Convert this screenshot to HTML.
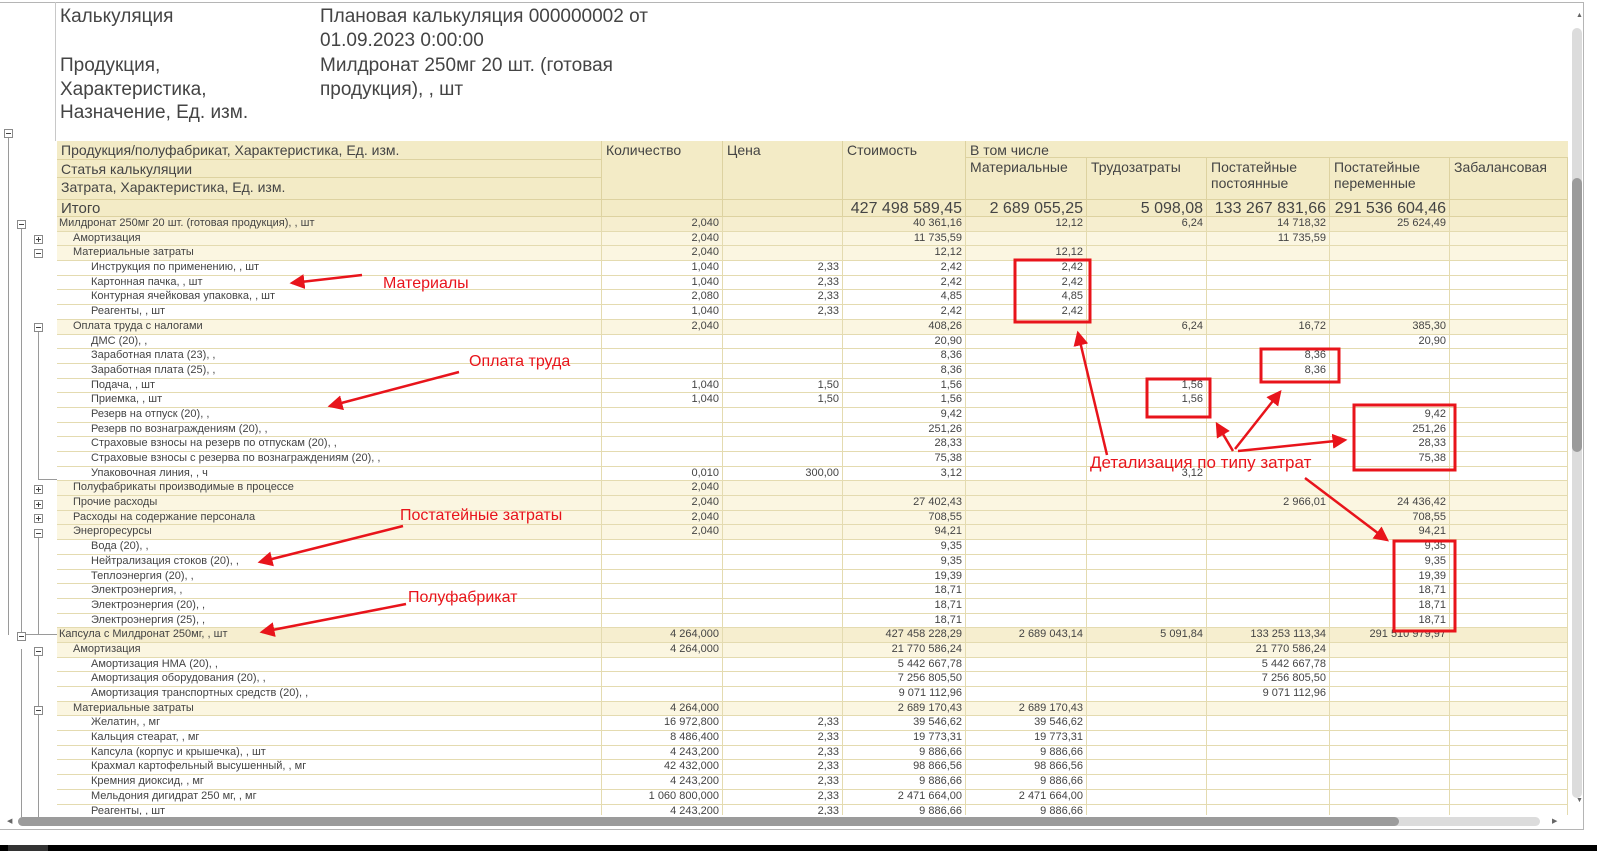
<!DOCTYPE html>
<html><head><meta charset="utf-8">
<style>
*{box-sizing:border-box;margin:0;padding:0}
body{width:1597px;height:851px;background:#fff;position:relative;overflow:hidden;font-family:"Liberation Sans",sans-serif;color:#333}
.frame{position:absolute;left:0;top:2px;width:1584px;height:828px;border:1px solid #b5b5b5;border-left:none;background:#fff}
.vl{position:absolute;left:55px;top:2px;width:1px;height:139px;background:#c8c8c8}
.t{position:absolute;font-size:19px;color:#444;line-height:23.5px}
#grid{position:absolute;left:57px;top:141px;width:1511px;height:674px;overflow:hidden}
.hd{position:absolute;background:#f3ebc6;border-right:1px solid #ddd2a0;border-bottom:1px solid #ddd2a0;font-size:14px;color:#444;padding:1px 4px;line-height:16px}
.rows{position:absolute;left:0;top:76px;width:1511px}
.r{display:flex;height:14.7px;border-bottom:1px solid #e4dbb0;font-size:11px;line-height:13.7px;color:#444}
.r div{border-right:1px solid #e4dbb0;text-align:right;padding-right:3px;white-space:nowrap;overflow:hidden}
.r div:first-child{text-align:left;width:545px}
.g0{background:#f6eecf}.g1{background:#fbf6e1}.d{background:#fff}
.c1,.c2{width:121px}.c3{width:123px}.c4{width:121px}.c5{width:120px}.c6{width:123px}.c7{width:120px}.c8{width:118px}
.c2{width:120px}
.l1{padding-left:16px}.l2{padding-left:34px}.l0{padding-left:2px}
.ic{position:absolute;width:9px;height:9px;border:1px solid #8a8a8a;background:#fff}
.ic:before{content:"";position:absolute;left:1px;top:3px;width:5px;height:1px;background:#444}
.ic.p:after{content:"";position:absolute;left:3px;top:1px;width:1px;height:5px;background:#444}
.tl{position:absolute;background:#9a9a9a}
.ann{position:absolute;color:#e8141b;font-size:16px;font-family:"Liberation Sans",sans-serif}
</style></head><body>
<div class="frame"></div>
<div class="vl"></div>
<div class="t" style="left:60px;top:5px">Калькуляция</div>
<div class="t" style="left:320px;top:5px">Плановая калькуляция 000000002 от<br>01.09.2023 0:00:00</div>
<div class="t" style="left:60px;top:54px">Продукция,<br>Характеристика,<br>Назначение, Ед. изм.</div>
<div class="t" style="left:320px;top:54px">Милдронат 250мг 20 шт. (готовая<br>продукция), , шт</div>

<div id="grid">
<div class="hd" style="left:0;top:0;width:545px;height:19px">Продукция/полуфабрикат, Характеристика, Ед. изм.</div>
<div class="hd" style="left:0;top:19px;width:545px;height:18px">Статья калькуляции</div>
<div class="hd" style="left:0;top:37px;width:545px;height:22px">Затрата, Характеристика, Ед. изм.</div>
<div class="hd" style="left:0;top:59px;width:545px;height:17px;font-size:15px">Итого</div>
<div class="hd" style="left:545px;top:0;width:121px;height:59px">Количество</div>
<div class="hd" style="left:666px;top:0;width:120px;height:59px">Цена</div>
<div class="hd" style="left:786px;top:0;width:123px;height:59px">Стоимость</div>
<div class="hd" style="left:909px;top:0;width:602px;height:17px;border-right:none">В том числе</div>
<div class="hd" style="left:909px;top:17px;width:121px;height:42px">Материальные</div>
<div class="hd" style="left:1030px;top:17px;width:120px;height:42px">Трудозатраты</div>
<div class="hd" style="left:1150px;top:17px;width:123px;height:42px">Постатейные постоянные</div>
<div class="hd" style="left:1273px;top:17px;width:120px;height:42px">Постатейные переменные</div>
<div class="hd" style="left:1393px;top:17px;width:118px;height:42px">Забалансовая</div>
<div class="hd" style="left:545px;top:59px;width:121px;height:17px"></div>
<div class="hd" style="left:666px;top:59px;width:120px;height:17px"></div>
<div class="hd" style="left:786px;top:59px;width:123px;height:17px;text-align:right;font-size:16px;padding-right:3px">427 498 589,45</div>
<div class="hd" style="left:909px;top:59px;width:121px;height:17px;text-align:right;font-size:16px;padding-right:3px">2 689 055,25</div>
<div class="hd" style="left:1030px;top:59px;width:120px;height:17px;text-align:right;font-size:16px;padding-right:3px">5 098,08</div>
<div class="hd" style="left:1150px;top:59px;width:123px;height:17px;text-align:right;font-size:16px;padding-right:3px">133 267 831,66</div>
<div class="hd" style="left:1273px;top:59px;width:120px;height:17px;text-align:right;font-size:16px;padding-right:3px">291 536 604,46</div>
<div class="hd" style="left:1393px;top:59px;width:118px;height:17px"></div>

<div class="rows">
<div class="r g0"><div class="l0">Милдронат 250мг 20 шт. (готовая продукция), , шт</div><div class="c1">2,040</div><div class="c2"></div><div class="c3">40 361,16</div><div class="c4">12,12</div><div class="c5">6,24</div><div class="c6">14 718,32</div><div class="c7">25 624,49</div><div class="c8"></div></div>
<div class="r g1"><div class="l1">Амортизация</div><div class="c1">2,040</div><div class="c2"></div><div class="c3">11 735,59</div><div class="c4"></div><div class="c5"></div><div class="c6">11 735,59</div><div class="c7"></div><div class="c8"></div></div>
<div class="r g1"><div class="l1">Материальные затраты</div><div class="c1">2,040</div><div class="c2"></div><div class="c3">12,12</div><div class="c4">12,12</div><div class="c5"></div><div class="c6"></div><div class="c7"></div><div class="c8"></div></div>
<div class="r d"><div class="l2">Инструкция по применению, , шт</div><div class="c1">1,040</div><div class="c2">2,33</div><div class="c3">2,42</div><div class="c4">2,42</div><div class="c5"></div><div class="c6"></div><div class="c7"></div><div class="c8"></div></div>
<div class="r d"><div class="l2">Картонная пачка, , шт</div><div class="c1">1,040</div><div class="c2">2,33</div><div class="c3">2,42</div><div class="c4">2,42</div><div class="c5"></div><div class="c6"></div><div class="c7"></div><div class="c8"></div></div>
<div class="r d"><div class="l2">Контурная ячейковая упаковка, , шт</div><div class="c1">2,080</div><div class="c2">2,33</div><div class="c3">4,85</div><div class="c4">4,85</div><div class="c5"></div><div class="c6"></div><div class="c7"></div><div class="c8"></div></div>
<div class="r d"><div class="l2">Реагенты, , шт</div><div class="c1">1,040</div><div class="c2">2,33</div><div class="c3">2,42</div><div class="c4">2,42</div><div class="c5"></div><div class="c6"></div><div class="c7"></div><div class="c8"></div></div>
<div class="r g1"><div class="l1">Оплата труда с налогами</div><div class="c1">2,040</div><div class="c2"></div><div class="c3">408,26</div><div class="c4"></div><div class="c5">6,24</div><div class="c6">16,72</div><div class="c7">385,30</div><div class="c8"></div></div>
<div class="r d"><div class="l2">ДМС (20), ,</div><div class="c1"></div><div class="c2"></div><div class="c3">20,90</div><div class="c4"></div><div class="c5"></div><div class="c6"></div><div class="c7">20,90</div><div class="c8"></div></div>
<div class="r d"><div class="l2">Заработная плата (23), ,</div><div class="c1"></div><div class="c2"></div><div class="c3">8,36</div><div class="c4"></div><div class="c5"></div><div class="c6">8,36</div><div class="c7"></div><div class="c8"></div></div>
<div class="r d"><div class="l2">Заработная плата (25), ,</div><div class="c1"></div><div class="c2"></div><div class="c3">8,36</div><div class="c4"></div><div class="c5"></div><div class="c6">8,36</div><div class="c7"></div><div class="c8"></div></div>
<div class="r d"><div class="l2">Подача, , шт</div><div class="c1">1,040</div><div class="c2">1,50</div><div class="c3">1,56</div><div class="c4"></div><div class="c5">1,56</div><div class="c6"></div><div class="c7"></div><div class="c8"></div></div>
<div class="r d"><div class="l2">Приемка, , шт</div><div class="c1">1,040</div><div class="c2">1,50</div><div class="c3">1,56</div><div class="c4"></div><div class="c5">1,56</div><div class="c6"></div><div class="c7"></div><div class="c8"></div></div>
<div class="r d"><div class="l2">Резерв на отпуск (20), ,</div><div class="c1"></div><div class="c2"></div><div class="c3">9,42</div><div class="c4"></div><div class="c5"></div><div class="c6"></div><div class="c7">9,42</div><div class="c8"></div></div>
<div class="r d"><div class="l2">Резерв по вознаграждениям (20), ,</div><div class="c1"></div><div class="c2"></div><div class="c3">251,26</div><div class="c4"></div><div class="c5"></div><div class="c6"></div><div class="c7">251,26</div><div class="c8"></div></div>
<div class="r d"><div class="l2">Страховые взносы на резерв по отпускам (20), ,</div><div class="c1"></div><div class="c2"></div><div class="c3">28,33</div><div class="c4"></div><div class="c5"></div><div class="c6"></div><div class="c7">28,33</div><div class="c8"></div></div>
<div class="r d"><div class="l2">Страховые взносы с резерва по вознаграждениям (20), ,</div><div class="c1"></div><div class="c2"></div><div class="c3">75,38</div><div class="c4"></div><div class="c5"></div><div class="c6"></div><div class="c7">75,38</div><div class="c8"></div></div>
<div class="r d"><div class="l2">Упаковочная линия, , ч</div><div class="c1">0,010</div><div class="c2">300,00</div><div class="c3">3,12</div><div class="c4"></div><div class="c5">3,12</div><div class="c6"></div><div class="c7"></div><div class="c8"></div></div>
<div class="r g1"><div class="l1">Полуфабрикаты производимые в процессе</div><div class="c1">2,040</div><div class="c2"></div><div class="c3"></div><div class="c4"></div><div class="c5"></div><div class="c6"></div><div class="c7"></div><div class="c8"></div></div>
<div class="r g1"><div class="l1">Прочие расходы</div><div class="c1">2,040</div><div class="c2"></div><div class="c3">27 402,43</div><div class="c4"></div><div class="c5"></div><div class="c6">2 966,01</div><div class="c7">24 436,42</div><div class="c8"></div></div>
<div class="r g1"><div class="l1">Расходы на содержание персонала</div><div class="c1">2,040</div><div class="c2"></div><div class="c3">708,55</div><div class="c4"></div><div class="c5"></div><div class="c6"></div><div class="c7">708,55</div><div class="c8"></div></div>
<div class="r g1"><div class="l1">Энергоресурсы</div><div class="c1">2,040</div><div class="c2"></div><div class="c3">94,21</div><div class="c4"></div><div class="c5"></div><div class="c6"></div><div class="c7">94,21</div><div class="c8"></div></div>
<div class="r d"><div class="l2">Вода (20), ,</div><div class="c1"></div><div class="c2"></div><div class="c3">9,35</div><div class="c4"></div><div class="c5"></div><div class="c6"></div><div class="c7">9,35</div><div class="c8"></div></div>
<div class="r d"><div class="l2">Нейтрализация стоков (20), ,</div><div class="c1"></div><div class="c2"></div><div class="c3">9,35</div><div class="c4"></div><div class="c5"></div><div class="c6"></div><div class="c7">9,35</div><div class="c8"></div></div>
<div class="r d"><div class="l2">Теплоэнергия (20), ,</div><div class="c1"></div><div class="c2"></div><div class="c3">19,39</div><div class="c4"></div><div class="c5"></div><div class="c6"></div><div class="c7">19,39</div><div class="c8"></div></div>
<div class="r d"><div class="l2">Электроэнергия, ,</div><div class="c1"></div><div class="c2"></div><div class="c3">18,71</div><div class="c4"></div><div class="c5"></div><div class="c6"></div><div class="c7">18,71</div><div class="c8"></div></div>
<div class="r d"><div class="l2">Электроэнергия (20), ,</div><div class="c1"></div><div class="c2"></div><div class="c3">18,71</div><div class="c4"></div><div class="c5"></div><div class="c6"></div><div class="c7">18,71</div><div class="c8"></div></div>
<div class="r d"><div class="l2">Электроэнергия (25), ,</div><div class="c1"></div><div class="c2"></div><div class="c3">18,71</div><div class="c4"></div><div class="c5"></div><div class="c6"></div><div class="c7">18,71</div><div class="c8"></div></div>
<div class="r g0"><div class="l0">Капсула с Милдронат 250мг, , шт</div><div class="c1">4 264,000</div><div class="c2"></div><div class="c3">427 458 228,29</div><div class="c4">2 689 043,14</div><div class="c5">5 091,84</div><div class="c6">133 253 113,34</div><div class="c7">291 510 979,97</div><div class="c8"></div></div>
<div class="r g1"><div class="l1">Амортизация</div><div class="c1">4 264,000</div><div class="c2"></div><div class="c3">21 770 586,24</div><div class="c4"></div><div class="c5"></div><div class="c6">21 770 586,24</div><div class="c7"></div><div class="c8"></div></div>
<div class="r d"><div class="l2">Амортизация НМА (20), ,</div><div class="c1"></div><div class="c2"></div><div class="c3">5 442 667,78</div><div class="c4"></div><div class="c5"></div><div class="c6">5 442 667,78</div><div class="c7"></div><div class="c8"></div></div>
<div class="r d"><div class="l2">Амортизация оборудования (20), ,</div><div class="c1"></div><div class="c2"></div><div class="c3">7 256 805,50</div><div class="c4"></div><div class="c5"></div><div class="c6">7 256 805,50</div><div class="c7"></div><div class="c8"></div></div>
<div class="r d"><div class="l2">Амортизация транспортных средств (20), ,</div><div class="c1"></div><div class="c2"></div><div class="c3">9 071 112,96</div><div class="c4"></div><div class="c5"></div><div class="c6">9 071 112,96</div><div class="c7"></div><div class="c8"></div></div>
<div class="r g1"><div class="l1">Материальные затраты</div><div class="c1">4 264,000</div><div class="c2"></div><div class="c3">2 689 170,43</div><div class="c4">2 689 170,43</div><div class="c5"></div><div class="c6"></div><div class="c7"></div><div class="c8"></div></div>
<div class="r d"><div class="l2">Желатин, , мг</div><div class="c1">16 972,800</div><div class="c2">2,33</div><div class="c3">39 546,62</div><div class="c4">39 546,62</div><div class="c5"></div><div class="c6"></div><div class="c7"></div><div class="c8"></div></div>
<div class="r d"><div class="l2">Кальция стеарат, , мг</div><div class="c1">8 486,400</div><div class="c2">2,33</div><div class="c3">19 773,31</div><div class="c4">19 773,31</div><div class="c5"></div><div class="c6"></div><div class="c7"></div><div class="c8"></div></div>
<div class="r d"><div class="l2">Капсула (корпус и крышечка), , шт</div><div class="c1">4 243,200</div><div class="c2">2,33</div><div class="c3">9 886,66</div><div class="c4">9 886,66</div><div class="c5"></div><div class="c6"></div><div class="c7"></div><div class="c8"></div></div>
<div class="r d"><div class="l2">Крахмал картофельный высушенный, , мг</div><div class="c1">42 432,000</div><div class="c2">2,33</div><div class="c3">98 866,56</div><div class="c4">98 866,56</div><div class="c5"></div><div class="c6"></div><div class="c7"></div><div class="c8"></div></div>
<div class="r d"><div class="l2">Кремния диоксид, , мг</div><div class="c1">4 243,200</div><div class="c2">2,33</div><div class="c3">9 886,66</div><div class="c4">9 886,66</div><div class="c5"></div><div class="c6"></div><div class="c7"></div><div class="c8"></div></div>
<div class="r d"><div class="l2">Мельдония дигидрат 250 мг, , мг</div><div class="c1">1 060 800,000</div><div class="c2">2,33</div><div class="c3">2 471 664,00</div><div class="c4">2 471 664,00</div><div class="c5"></div><div class="c6"></div><div class="c7"></div><div class="c8"></div></div>
<div class="r d"><div class="l2">Реагенты, , шт</div><div class="c1">4 243,200</div><div class="c2">2,33</div><div class="c3">9 886,66</div><div class="c4">9 886,66</div><div class="c5"></div><div class="c6"></div><div class="c7"></div><div class="c8"></div></div>
</div>
</div>

<!-- tree -->
<div class="tl" style="left:8px;top:138px;width:1px;height:497px"></div>
<div class="tl" style="left:21px;top:228px;width:1px;height:407px"></div>
<div class="tl" style="left:21px;top:634px;width:36px;height:1px"></div>
<div class="tl" style="left:38px;top:331px;width:1px;height:149px"></div>
<div class="tl" style="left:38px;top:479px;width:19px;height:1px"></div>
<div class="tl" style="left:38px;top:537px;width:1px;height:97px"></div>
<div class="tl" style="left:21px;top:649px;width:1px;height:170px"></div>
<div class="tl" style="left:38px;top:655px;width:1px;height:51px"></div>
<div class="tl" style="left:38px;top:714px;width:1px;height:105px"></div>
<div class="ic" style="left:4px;top:129px"></div>
<div class="ic" style="left:17px;top:220px"></div>
<div class="ic p" style="left:34px;top:235px"></div>
<div class="ic" style="left:34px;top:249px"></div>
<div class="ic" style="left:34px;top:323px"></div>
<div class="ic p" style="left:34px;top:485px"></div>
<div class="ic p" style="left:34px;top:500px"></div>
<div class="ic p" style="left:34px;top:514px"></div>
<div class="ic" style="left:34px;top:529px"></div>
<div class="ic" style="left:17px;top:632px"></div>
<div class="ic" style="left:34px;top:647px"></div>
<div class="ic" style="left:34px;top:706px"></div>

<!-- scrollbars -->
<div style="position:absolute;left:1576px;top:12px;font-size:7px;color:#666">▲</div>
<div style="position:absolute;left:1572px;top:28px;width:10px;height:770px;border-radius:5px;background:#dcdcdc"></div>
<div style="position:absolute;left:1572px;top:178px;width:10px;height:274px;border-radius:5px;background:#9b9b9b"></div>
<div style="position:absolute;left:1576px;top:797px;font-size:7px;color:#666">▼</div>
<div style="position:absolute;left:7px;top:817px;font-size:7px;color:#666">◀</div>
<div style="position:absolute;left:1552px;top:817px;font-size:7px;color:#666">▶</div>
<div style="position:absolute;left:18px;top:817px;width:1522px;height:9px;border-radius:5px;background:#dcdcdc"></div>
<div style="position:absolute;left:18px;top:817px;width:1381px;height:9px;border-radius:5px;background:#9b9b9b"></div>
<div style="position:absolute;left:0;top:845px;width:1597px;height:6px;background:#000"></div>
<div style="position:absolute;left:8px;top:845px;width:40px;height:6px;background:#333"></div>

<!-- annotations -->
<svg style="position:absolute;left:0;top:0" width="1597" height="851">
<defs><marker id="a" markerWidth="6" markerHeight="6" refX="5" refY="3" orient="auto" markerUnits="strokeWidth"><path d="M0,0 L6,3 L0,6 z" fill="#e8141b"/></marker></defs>
<g fill="none" stroke="#e8141b" stroke-width="3">
<rect x="1015" y="260" width="75" height="62"/>
<rect x="1261" y="349" width="78" height="33"/>
<rect x="1147" y="379" width="63" height="38"/>
<rect x="1354" y="405" width="101" height="65"/>
<rect x="1394" y="541" width="61" height="90"/>
<g stroke-width="2.5" marker-end="url(#a)">
<line x1="1107" y1="455" x2="1078" y2="333"/>
<line x1="1233" y1="451" x2="1217" y2="424"/>
<line x1="1235" y1="449" x2="1280" y2="392"/>
<line x1="1238" y1="451" x2="1345" y2="440"/>
<line x1="1305" y1="478" x2="1387" y2="540"/>
<line x1="362" y1="275" x2="292" y2="283"/>
<line x1="459" y1="372" x2="330" y2="406"/>
<line x1="403" y1="526" x2="260" y2="562"/>
<line x1="406" y1="604" x2="262" y2="632"/>
</g></g>
</svg>
<div class="ann" style="left:383px;top:275px">Материалы</div>
<div class="ann" style="left:469px;top:353px">Оплата труда</div>
<div class="ann" style="left:400px;top:507px">Постатейные затраты</div>
<div class="ann" style="left:408px;top:589px">Полуфабрикат</div>
<div class="ann" style="left:1090px;top:453px;font-size:17px">Детализация по типу затрат</div>
</body></html>
